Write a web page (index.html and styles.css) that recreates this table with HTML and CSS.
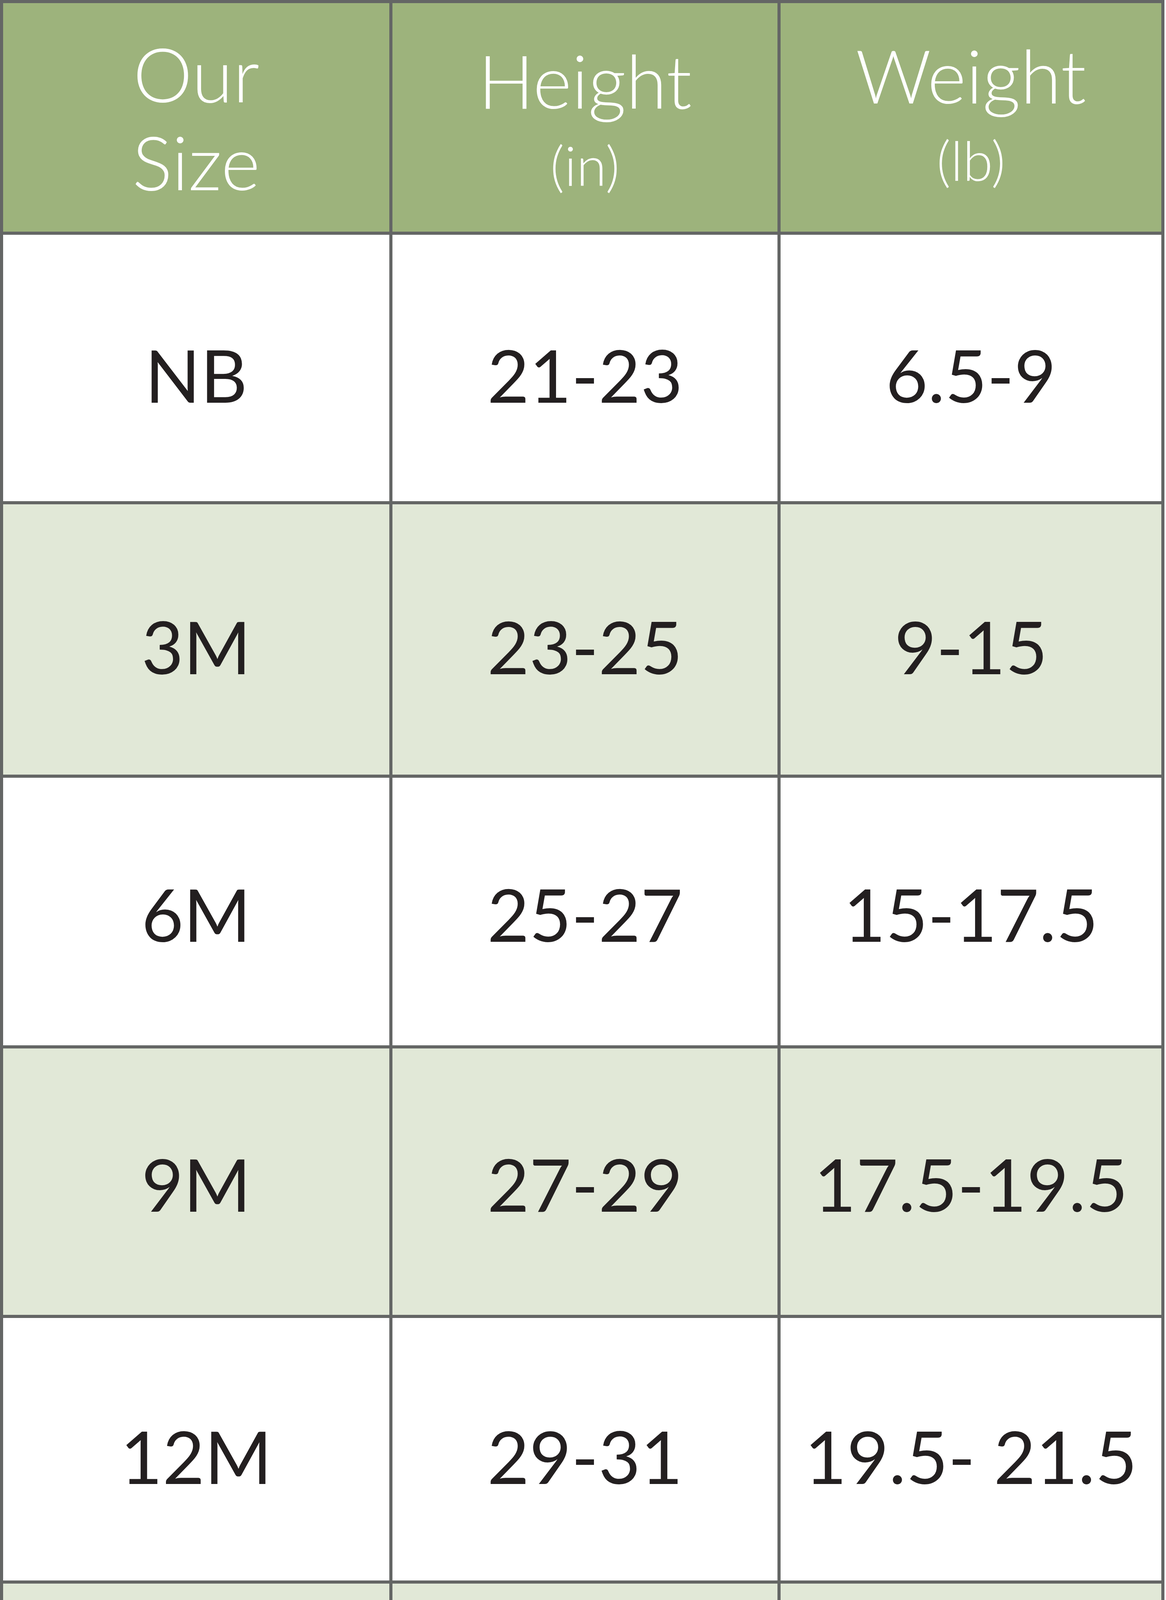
FILE: index.html
```html
<!DOCTYPE html>
<html lang="en">
<head>
<meta charset="utf-8">
<title>Size Chart</title>
<link rel="stylesheet" href="styles.css">
</head>
<body>
<div class="chart">
  <div class="cell head"><span class="head-line">Our</span><span class="head-line">Size</span></div>
  <div class="cell head"><span class="head-main">Height</span><span class="head-sub">(in)</span></div>
  <div class="cell head head-raised"><span class="head-main">Weight</span><span class="head-sub">(lb)</span></div>

  <div class="cell low">NB</div>
  <div class="cell low">21-23</div>
  <div class="cell low">6.5-9</div>

  <div class="cell alt low">3M</div>
  <div class="cell alt low">23-25</div>
  <div class="cell alt low">9-15</div>

  <div class="cell">6M</div>
  <div class="cell">25-27</div>
  <div class="cell">15-17.5</div>

  <div class="cell alt">9M</div>
  <div class="cell alt">27-29</div>
  <div class="cell alt">17.5-19.5</div>

  <div class="cell low">12M</div>
  <div class="cell low">29-31</div>
  <div class="cell low">19.5- 21.5</div>

  <div class="cell alt low">18M</div>
  <div class="cell alt low">31-33.5</div>
  <div class="cell alt low">21.5-23.5</div>

  <div class="cell">24M</div>
  <div class="cell">33.5-36</div>
  <div class="cell">23.5-25.5</div>
</div>
</body>
</html>
```

FILE: styles.css
```css
html, body {
  margin: 0;
  padding: 0;
  background: #ffffff;
}

body {
  font-family: "Lato", "Open Sans", "DejaVu Sans", sans-serif;
  color: #231f20;
}

.chart {
  width: 2982px;
  box-sizing: border-box;
  display: grid;
  grid-template-columns: 989px 986px 975px;
  grid-template-rows: 585px 682px 692px 685px 682px 672px 702px 698px;
  gap: 8px;
  padding: 8px;
  background: #646665;
}

.cell {
  background: #ffffff;
  display: flex;
  align-items: center;
  justify-content: center;
  font-size: 186px;
  font-weight: 400;
  line-height: 1;
  white-space: pre;
  padding-top: 10px;
}

.cell.alt {
  background: #e1e8d7;
}

.cell.low {
  padding-top: 34px;
}

.cell.head {
  background: #9db37c;
  color: #ffffff;
  flex-direction: column;
  font-weight: 300;
  padding-top: 0;
}

.cell.head-raised {
  padding-bottom: 26px;
}

.head-line {
  display: block;
  font-size: 192px;
  line-height: 1;
}

.head-line + .head-line {
  margin-top: 33px;
}

.head-main {
  display: block;
  font-size: 190px;
  line-height: 1;
}

.head-sub {
  display: block;
  font-size: 140px;
  line-height: 1;
  margin-top: 53px;
}
```
